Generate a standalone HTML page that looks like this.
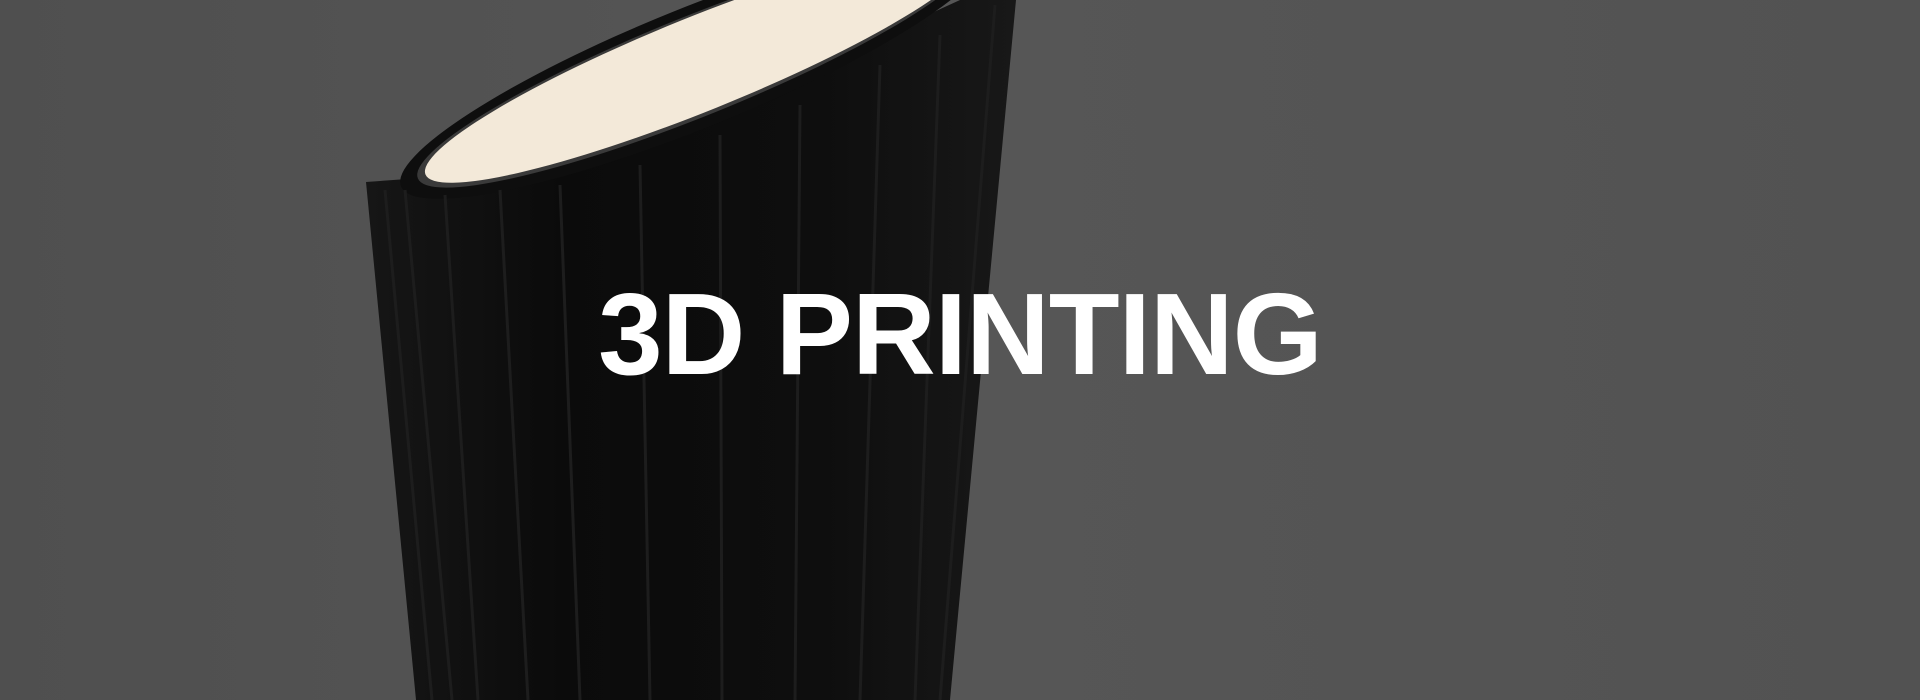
<!DOCTYPE html>
<html><head><meta charset="utf-8"><style>
html,body{margin:0;padding:0;width:1920px;height:700px;overflow:hidden;background:#545454}
svg{position:absolute;left:0;top:0}
.t{position:absolute;left:0;width:1920px;top:276px;text-align:center;font-family:"Liberation Sans",Arial,sans-serif;font-weight:bold;font-size:116px;line-height:116px;color:#fff;letter-spacing:-1px}
</style></head><body>
<svg width="1920" height="700" viewBox="0 0 1920 700">
<defs><linearGradient id="bg" x1="0" y1="0" x2="1" y2="0"><stop offset="0" stop-color="#4f4f4f"/><stop offset="0.5" stop-color="#565656"/><stop offset="1" stop-color="#525252"/></linearGradient>
<linearGradient id="v" x1="0" y1="0" x2="1" y2="0"><stop offset="0" stop-color="#161616"/><stop offset="0.3" stop-color="#0b0b0b"/><stop offset="0.7" stop-color="#0e0e0e"/><stop offset="1" stop-color="#181818"/></linearGradient></defs>
<rect width="1920" height="700" fill="url(#bg)"/>
<path d="M366,182 L416,700 L950,700 L1016,0 L960,0 L600,165 Z" fill="url(#v)"/>
<ellipse cx="694" cy="68" rx="316" ry="60" transform="rotate(-22 694 68)" fill="#0e0e0e"/>
<g stroke="#1d1d1d" stroke-width="3">
<line x1="385" y1="190" x2="432" y2="700"/><line x1="405" y1="190" x2="452" y2="700"/>
<line x1="445" y1="195" x2="478" y2="700"/><line x1="500" y1="190" x2="528" y2="700"/>
<line x1="560" y1="185" x2="580" y2="700"/><line x1="640" y1="165" x2="650" y2="700"/>
<line x1="720" y1="135" x2="722" y2="700"/><line x1="800" y1="105" x2="795" y2="700"/>
<line x1="880" y1="65" x2="860" y2="700"/><line x1="940" y1="35" x2="915" y2="700"/>
<line x1="995" y1="5" x2="940" y2="700"/>
</g>
<ellipse cx="696" cy="66" rx="300" ry="50" transform="rotate(-22 696 66)" fill="#3a3a3a"/>
<ellipse cx="699" cy="64" rx="295" ry="47" transform="rotate(-22 699 64)" fill="#f3e9d9"/>
</svg>
<div class="t">3D PRINTING</div>
</body></html>
